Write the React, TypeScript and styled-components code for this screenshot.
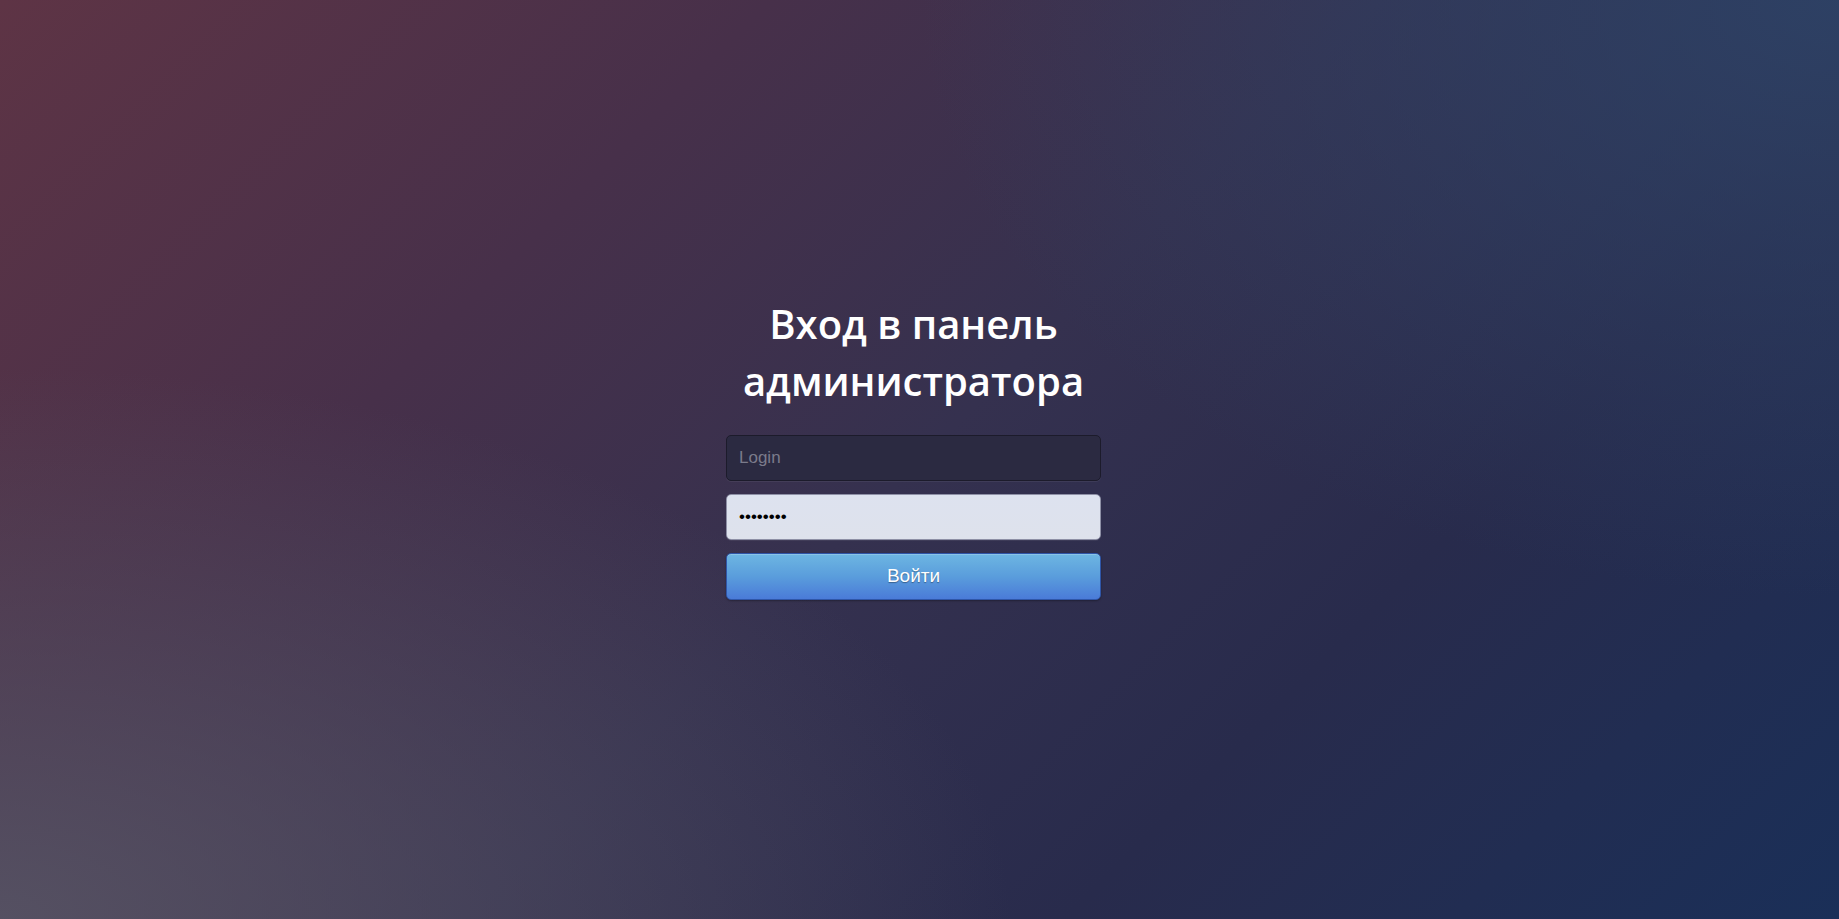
import React from "react";
import styled, { createGlobalStyle } from "styled-components";

const Global = createGlobalStyle`
  html, body { margin: 0; padding: 0; height: 100%; }
  body { font-family: "Liberation Sans", Arial, sans-serif; }
  #root { height: 100%; }
`;

const Page = styled.main`
  box-sizing: border-box;
  width: 100%;
  height: 919px;
  display: flex;
  align-items: center;
  justify-content: center;
  padding: 0 12px 25px 0;
  background:
    radial-gradient(ellipse 55% 60% at 0% 100%, rgba(88, 86, 102, 0.85) 0%, rgba(88, 86, 102, 0) 100%),
    radial-gradient(ellipse 50% 65% at 100% 0%, rgba(46, 68, 104, 0.85) 0%, rgba(46, 68, 104, 0) 100%),
    linear-gradient(135deg, #5e3445 0%, #47304a 28%, #35314f 50%, #282b4c 72%, #1a2f58 100%);
`;

const Panel = styled.form`
  width: 375px;
  display: flex;
  flex-direction: column;
  align-items: stretch;
`;

const Title = styled.h1`
  margin: 0 0 26px;
  text-align: center;
  color: #ffffff;
  font-family: "Open Sans", "Noto Sans", sans-serif;
  font-weight: 600;
  font-size: 40px;
  line-height: 57px;
`;

const Field = styled.input<{ $light?: boolean }>`
  box-sizing: border-box;
  height: 46px;
  width: 100%;
  margin: 0 0 13px;
  padding: 0 12px;
  border-radius: 5px;
  font-family: "Liberation Sans", Arial, sans-serif;
  font-size: 17px;
  outline: none;
  border: 1px solid ${(p) => (p.$light ? "#8e90a6" : "#1c1b2b")};
  background: ${(p) => (p.$light ? "linear-gradient(#dde2ef, #dee2ec)" : "#2b2a41")};
  color: ${(p) => (p.$light ? "#000000" : "#d0d0d8")};
  box-shadow: 0 1px 0 rgba(255, 255, 255, 0.06);
  &::placeholder { color: #7b7b8b; }
`;

const Submit = styled.button`
  box-sizing: border-box;
  height: 47px;
  width: 100%;
  border-radius: 5px;
  border: 1px solid #2f56a8;
  background: linear-gradient(#6db6e2 0%, #5a9ddc 50%, #4a7bd8 100%);
  color: #ffffff;
  font-family: "Liberation Sans", Arial, sans-serif;
  font-size: 19px;
  text-shadow: 0 1px 1px rgba(0, 0, 0, 0.35);
  box-shadow: inset 0 1px 0 rgba(255, 255, 255, 0.2), 0 1px 2px rgba(0, 0, 0, 0.3);
  cursor: pointer;
`;

export default function App() {
  return (
    <>
      <Global />
      <Page>
        <Panel onSubmit={(e) => e.preventDefault()}>
          <Title>Вход в панель администратора</Title>
          <Field type="text" placeholder="Login" />
          <Field $light type="password" defaultValue="12345678" />
          <Submit type="submit">Войти</Submit>
        </Panel>
      </Page>
    </>
  );
}
